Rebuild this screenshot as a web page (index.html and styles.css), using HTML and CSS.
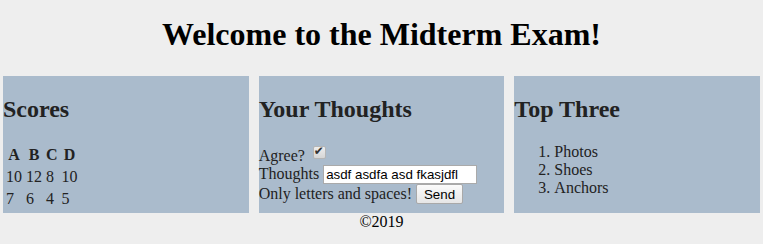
FILE: index.html
```html
<!DOCTYPE html>
<html>
<head>
    <title>Midterm Exam</title>
    <link rel="stylesheet" href="styles.css">
</head>
<body>
    <h1>Welcome to the Midterm Exam!</h1>

    <div class="panels">
        <div class="panel">
            <h2>Scores</h2>
            <table>
                <tr><th>A</th><th>B</th><th>C</th><th>D</th></tr>
                <tr><td>10</td><td>12</td><td>8</td><td>10</td></tr>
                <tr><td>7</td><td>6</td><td>4</td><td>5</td></tr>
            </table>
        </div>
        <div class="panel">
            <h2>Your Thoughts</h2>
            <form id="thoughtsForm">
                Agree? <input type="checkbox" name="agree" checked><br>
                Thoughts <input type="text" name="thoughts" value="asdf asdfa asd fkasjdfl"><br>
                Only letters and spaces! <button type="submit">Send</button>
            </form>
        </div>
        <div class="panel">
            <h2>Top Three</h2>
            <ol>
                <li>Photos</li>
                <li>Shoes</li>
                <li>Anchors</li>
            </ol>
        </div>
    </div>

    <div class="footer">&copy;2019</div>
</body>
</html>
```

FILE: styles.css
```css
body {
    font-family: "Liberation Serif", serif;
    font-size: 16px;
    background-color: #eeeeee;
    margin: 0;
}

h1 {
    text-align: center;
    font-size: 32px;
    margin: 16px 0 23px 0;
    color: #000;
}

.panels {
    display: flex;
    gap: 10px;
    padding: 0 3px;
}

.panel {
    flex: 1;
    background-color: #aabbcc; /* steel blue-grey boxes */
    color: #222;
    padding-bottom: 2px;
}

.panel h2 {
    font-size: 24px;
    margin: 20px 0;
}

table {
    border-spacing: 2px;
}

th, td {
    padding: 1px;
}

td {
    text-align: left;
}

form {
    margin: 0;
}

input[type="text"] {
    font-family: "Liberation Sans", Arial, sans-serif;
    font-size: 13.33px;
    width: 148px;
    padding: 1px 2px;
    border: 1px solid #aaa;
    background: #fff;
}

/* old-style grey checkbox */
input[type="checkbox"] {
    appearance: none;
    -webkit-appearance: none;
    width: 13px;
    height: 13px;
    margin: 3px 3px 3px 4px;
    border: 1px solid #b5b5b5;
    border-radius: 2px;
    background: linear-gradient(#ededed, #d6d6d6);
    position: relative;
    vertical-align: -1px;
    box-sizing: border-box;
}

input[type="checkbox"]:checked::after {
    content: "\2714";
    position: absolute;
    left: 0;
    top: -3px;
    font-family: "DejaVu Sans", sans-serif;
    font-size: 12px;
    color: #333;
}

button {
    font-family: "Liberation Sans", Arial, sans-serif;
    font-size: 13.33px;
    color: #000;
    padding: 1px 7px;
    height: 20px;
    border: 1px solid #a9a9a9;
    border-radius: 2px;
    background: linear-gradient(#fbfbfb, #e6e6e6);
}

ol {
    margin: 0;
    padding-left: 40px;
}

.footer {
    text-align: center;
}
```
